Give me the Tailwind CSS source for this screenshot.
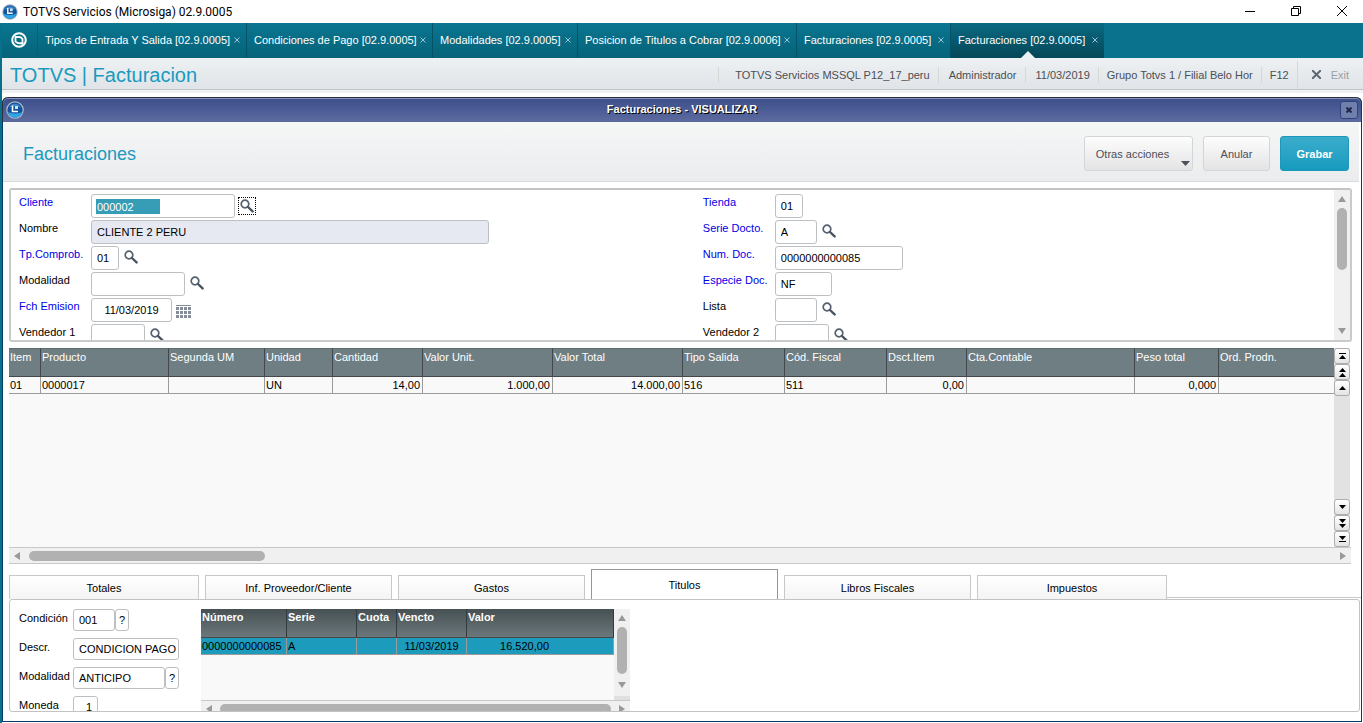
<!DOCTYPE html>
<html lang="es">
	<head>
		<meta charset="UTF-8" />
		<meta name="viewport" content="width=device-width, initial-scale=1.0" />
		<title>TOTVS Servicios (Microsiga) 02.9.0005</title>
		<script src="https://cdn.jsdelivr.net/npm/@tailwindcss/browser@4"></script>
	</head>

	<body
		class="h-screen overflow-hidden flex flex-col bg-white text-black text-[11px] leading-4 font-['Liberation_Sans',Arial,sans-serif]"
	>
		<!-- Shared icons -->
		<svg class="hidden">
			<symbol id="lens" viewBox="0 0 14 14">
				<circle cx="5" cy="5" r="3.8" fill="none" stroke="#56616f" stroke-width="1.7" />
				<path d="M8 8l4.6 4.4" stroke="#4a5563" stroke-width="2.4" stroke-linecap="round" />
			</symbol>
			<symbol id="orb" viewBox="0 0 18 18">
				<circle cx="9" cy="9" r="8.8" fill="#a9b9ca" />
				<circle cx="9" cy="9" r="7.6" fill="#12539a" />
				<path d="M2 11a7.200 7.200 0 0 0 14 0q-6 3-14 0z" fill="#2fa4e6" />
				<path d="M3 6.500a6.600 6.600 0 0 1 12 0q-6-2.500-12 0z" fill="#3f86c6" />
				<path d="M6.500 4.500v6h5.500" fill="none" stroke="#fff" stroke-width="1.600" />
				<path d="M9 5h3v3H9z" fill="#cfe4f5" />
			</symbol>
			<symbol id="cross" viewBox="0 0 6 6">
				<path d="M.5 .5l5 5M5.500 .5l-5 5" stroke="currentColor" stroke-width="1" />
			</symbol>
			<symbol id="up" viewBox="0 0 8 6"><path d="M4 0l4 6H0z" fill="#999" /></symbol>
			<symbol id="down" viewBox="0 0 8 6"><path d="M4 6l4-6H0z" fill="#999" /></symbol>
			<symbol id="left" viewBox="0 0 6 8"><path d="M0 4l6-4v8z" fill="#999" /></symbol>
			<symbol id="right" viewBox="0 0 6 8"><path d="M6 4L0 0v8z" fill="#999" /></symbol>
		</svg>

		<!-- System title bar -->
		<header class="h-[23px] shrink-0 flex items-center">
			<svg class="ml-0.5 size-4"><use href="#orb" /></svg>
			<h1 class="ml-[5px] text-xs font-[Roboto,'Open_Sans',sans-serif]">
				TOTVS Servicios (Microsiga) 02.9.0005
			</h1>
			<div class="ml-auto pr-4 flex items-center gap-9">
				<button aria-label="Minimizar" class="pb-0.5">
					<svg class="w-[10px] h-[10px]" viewBox="0 0 10 10"><path d="M0 5.500h10" stroke="#000" /></svg>
				</button>
				<button aria-label="Restaurar" class="pb-0.5">
					<svg class="w-[10px] h-[10px]" viewBox="0 0 10 10">
						<path d="M.5 2.500h7v7h-7zM2.500 2.500v-2h7v7h-2" fill="none" stroke="#000" />
					</svg>
				</button>
				<button aria-label="Cerrar" class="pb-0.5">
					<svg class="w-[10px] h-[10px]" viewBox="0 0 10 10"><path d="M0 0l10 10M10 0L0 10" stroke="#000" /></svg>
				</button>
			</div>
		</header>

		<div class="flex-1 min-h-0 flex flex-col border-l-2 border-[#07708b]">
			<!-- Routine tabs -->
			<nav class="h-[35px] shrink-0 flex bg-[#0a728d] text-white whitespace-nowrap [&>div]:pb-0.5">
				<button aria-label="Inicio" class="w-9 pr-0.5 pb-0.5 flex items-center justify-center bg-linear-to-b from-[#0b7691] to-[#056379] border-r border-[#0d5c70]">
					<svg class="size-4" viewBox="0 0 16 16">
						<circle cx="8" cy="8" r="6.800" fill="none" stroke="#fff" stroke-width="2" />
						<path d="M4.500 5l5 .2 2 1.800v4.500l-4.800-.5L4.500 9.500z" fill="none" stroke="#fff" stroke-width="1.800" stroke-linejoin="round" />
					</svg>
				</button>
				<div class="w-[209px] pl-[7px] pr-1.5 flex items-center justify-between bg-linear-to-b from-[#0b7691] to-[#056379] border-r border-[#045268]">
					<a href="#">Tipos de Entrada Y Salida [02.9.0005]</a>
					<button aria-label="Cerrar" class="text-[#9cc7d2]"><svg class="size-1.5"><use href="#cross" /></svg></button>
				</div>
				<div class="w-[186px] pl-[7px] pr-1.5 flex items-center justify-between bg-linear-to-b from-[#0b7691] to-[#056379] border-r border-[#045268]">
					<a href="#">Condiciones de Pago [02.9.0005]</a>
					<button aria-label="Cerrar" class="text-[#9cc7d2]"><svg class="size-1.5"><use href="#cross" /></svg></button>
				</div>
				<div class="w-[145px] pl-[7px] pr-1.5 flex items-center justify-between bg-linear-to-b from-[#0b7691] to-[#056379] border-r border-[#045268]">
					<a href="#">Modalidades [02.9.0005]</a>
					<button aria-label="Cerrar" class="text-[#9cc7d2]"><svg class="size-1.5"><use href="#cross" /></svg></button>
				</div>
				<div class="w-[219px] pl-[7px] pr-1.5 flex items-center justify-between bg-linear-to-b from-[#0b7691] to-[#056379] border-r border-[#045268]">
					<a href="#">Posicion de Titulos a Cobrar [02.9.0006]</a>
					<button aria-label="Cerrar" class="text-[#9cc7d2]"><svg class="size-1.5"><use href="#cross" /></svg></button>
				</div>
				<div class="w-[154px] pl-[7px] pr-1.5 flex items-center justify-between bg-linear-to-b from-[#0b7691] to-[#056379] border-r border-[#045268]">
					<a href="#">Facturaciones [02.9.0005]</a>
					<button aria-label="Cerrar" class="text-[#9cc7d2]"><svg class="size-1.5"><use href="#cross" /></svg></button>
				</div>
				<div class="relative w-[153px] pl-[7px] pr-1.5 flex items-center justify-between bg-linear-to-b from-[#0a6a82] to-[#054758]">
					<a href="#" aria-current="page">Facturaciones [02.9.0005]</a>
					<button aria-label="Cerrar" class="text-[#9cc7d2]"><svg class="size-1.5"><use href="#cross" /></svg></button>
					<svg class="absolute bottom-0 left-1/2 -translate-x-1/2 w-3.5 h-[7px]" viewBox="0 0 14 7"><path d="M7 0l7 7H0z" fill="#eef1f3" /></svg>
				</div>
			</nav>

			<!-- Module bar -->
			<div class="h-8 shrink-0 flex items-center bg-linear-to-b from-[#eef1f3] to-[#e0e4e8] border-b border-[#bfc4ca]">
				<h2 class="pl-2 pt-0.5 text-xl text-[#1a9abf] whitespace-nowrap">TOTVS | Facturacion</h2>
				<div class="ml-auto pt-0.5 pr-3.5 h-full flex items-center text-[#4b4f54] whitespace-nowrap">
					<span class="pl-4 pr-2 border-l border-[#d5d8d5]">TOTVS Servicios MSSQL P12_17_peru</span>
					<span class="pl-2.5 pr-2 border-l border-[#d5d8d5]">Administrador</span>
					<span class="pl-2.5 pr-2 border-l border-[#d5d8d5]">11/03/2019</span>
					<span class="px-2 border-l border-[#d5d8d5]">Grupo Totvs 1 / Filial Belo Hor</span>
					<span class="px-2 border-l border-[#d5d8d5]">F12</span>
					<button class="h-7 pl-3.5 flex items-center gap-2.5 border-l border-[#d5d8d5] text-[#9a9ea3]">
						<svg class="size-[9px]" viewBox="0 0 9 9"><path d="M0 0l9 9M9 0L0 9" stroke="#5d6974" stroke-width="2" /></svg>
						Exit
					</button>
				</div>
			</div>
			<div class="h-[3px] shrink-0 bg-[#f1f1f3]"></div>

			<!-- Dialog window -->
			<div class="mt-1 mr-px flex-1 min-h-0 mb-px flex flex-col border border-t-0 border-[#003c66] rounded-t-md">
				<div class="h-[25px] shrink-0 px-[3px] -mx-px flex items-center rounded-t-md border border-b-0 border-[#2b3040] bg-linear-to-b from-[#3b4e8b] to-[#5d6b9f] shadow-[inset_0_1px_0_#8792b8] text-white">
					<svg class="size-[18px]"><use href="#orb" /></svg>
					<h3 class="flex-1 pb-0.5 text-center font-bold [text-shadow:1px_1px_0_#000]">Facturaciones - VISUALIZAR</h3>
					<button aria-label="Cerrar" class="size-[18px] flex items-center justify-center rounded-[3px] border border-[#2f427c] bg-[#7080ad]">
						<svg class="size-1.5" viewBox="0 0 6 6"><path d="M.5 .5l5 5M5.500 .5l-5 5" stroke="#20284a" stroke-width="2" /></svg>
					</button>
				</div>

				<!-- Routine header -->
				<div class="h-[60px] shrink-0 mr-0.5 pl-5 pr-2.5 pt-1 flex items-center gap-2.5 bg-linear-to-b from-[#f5f6f6] to-[#ebecee] border-b border-[#d8dadc]">
					<h2 class="mr-auto text-lg text-[#1a9abf]">Facturaciones</h2>
					<button class="relative w-[109px] h-[35px] pr-3 rounded-[3px] border border-[#d3d5d7] bg-linear-to-b from-[#fdfdfd] to-[#e4e4e4] text-[#4b4f5a]">
						Otras acciones
						<svg class="absolute right-0.5 bottom-1 w-[9px] h-[5px]" viewBox="0 0 9 5"><path d="M0 0h9L4.500 5z" fill="#4a525c" /></svg>
					</button>
					<button class="w-[67px] h-[35px] rounded-[3px] border border-[#d3d5d7] bg-linear-to-b from-[#fdfdfd] to-[#e4e4e4] text-[#4b4f5a]">Anular</button>
					<button class="w-[69px] h-[35px] rounded-[3px] border border-[#1d98ba] bg-linear-to-b from-[#3aaccb] to-[#149bbf] text-white font-bold">Grabar</button>
				</div>

				<div class="flex-1 min-h-0 pl-1.5 pt-1.5 flex flex-col">
					<!-- Invoice header form -->
					<form class="h-[154px] shrink-0 mr-[9px] flex rounded-[3px] border-2 border-t-[#c3c3c3] border-[#cacaca] overflow-hidden">
						<div class="flex-1 pl-2 pt-1 grid grid-cols-[52%_1fr] content-start">
							<div class="flex flex-col gap-0.5">
								<div class="flex h-6">
									<label for="cliente" class="w-[72px] text-[#0000e6]">Cliente</label>
									<div class="w-36 h-6 p-1 border border-[#bcc0c2] rounded-[3px]">
										<input id="cliente" value="000002" class="block w-16 h-[15px] pl-px bg-[#379cb5] text-white outline-none" />
									</div>
									<button type="button" aria-label="Buscar" class="ml-[3px] mt-[3px] size-[18px] p-0.5 outline-1 -outline-offset-1 outline-dotted outline-black"><svg class="size-3.5"><use href="#lens" /></svg></button>
								</div>
								<div class="flex h-6">
									<label for="nombre" class="w-[72px]">Nombre</label>
									<input id="nombre" readonly value="CLIENTE 2 PERU" class="w-[398px] h-6 px-[5px] border border-[#bcc0c2] rounded-[3px] bg-[#e6e9f2]" />
								</div>
								<div class="flex h-6">
									<label for="comprob" class="w-[72px] text-[#0000e6]">Tp.Comprob.</label>
									<input id="comprob" value="01" class="w-7 h-6 px-[5px] border border-[#bcc0c2] rounded-[3px]" />
									<button type="button" aria-label="Buscar" class="ml-[5px] mt-1 size-3.5"><svg class="size-3.5"><use href="#lens" /></svg></button>
								</div>
								<div class="flex h-6">
									<label for="modalidad" class="w-[72px]">Modalidad</label>
									<input id="modalidad" class="w-[94px] h-6 px-[5px] border border-[#bcc0c2] rounded-[3px]" />
									<button type="button" aria-label="Buscar" class="ml-[5px] mt-1 size-3.5"><svg class="size-3.5"><use href="#lens" /></svg></button>
								</div>
								<div class="flex h-6">
									<label for="emision" class="w-[72px] text-[#0000e6]">Fch Emision</label>
									<input id="emision" value="11/03/2019" class="w-[81px] h-6 px-[5px] text-center border border-[#bcc0c2] rounded-[3px]" />
									<button type="button" aria-label="Calendario" class="ml-1 mt-1.5 size-[15px]">
										<svg class="w-[15px] h-3.5" viewBox="0 0 15 14">
											<path d="M0 .5h15" stroke="#868d99" />
											<path d="M0 3.500h15M0 7.500h15M0 11.500h15" stroke="#868d99" stroke-width="3" stroke-dasharray="3 1" />
										</svg>
									</button>
								</div>
								<div class="flex h-6">
									<label for="vendedor1" class="w-[72px]">Vendedor 1</label>
									<input id="vendedor1" class="w-[54px] h-6 px-[5px] border border-[#bcc0c2] rounded-[3px]" />
									<button type="button" aria-label="Buscar" class="ml-[5px] mt-1 size-3.5"><svg class="size-3.5"><use href="#lens" /></svg></button>
								</div>
							</div>
							<div class="flex flex-col gap-0.5">
								<div class="flex h-6">
									<label for="tienda" class="w-[72px] text-[#0000e6]">Tienda</label>
									<input id="tienda" value="01" class="w-7 h-6 px-[5px] border border-[#bcc0c2] rounded-[3px]" />
								</div>
								<div class="flex h-6">
									<label for="serie" class="w-[72px] text-[#0000e6]">Serie Docto.</label>
									<input id="serie" value="A" class="w-[42px] h-6 px-[5px] border border-[#bcc0c2] rounded-[3px]" />
									<button type="button" aria-label="Buscar" class="ml-[5px] mt-1 size-3.5"><svg class="size-3.5"><use href="#lens" /></svg></button>
								</div>
								<div class="flex h-6">
									<label for="numdoc" class="w-[72px] text-[#0000e6]">Num. Doc.</label>
									<input id="numdoc" value="0000000000085" class="w-32 h-6 px-[5px] border border-[#bcc0c2] rounded-[3px]" />
								</div>
								<div class="flex h-6">
									<label for="especie" class="w-[72px] text-[#0000e6]">Especie Doc.</label>
									<input id="especie" value="NF" class="w-[57px] h-6 px-[5px] border border-[#bcc0c2] rounded-[3px]" />
								</div>
								<div class="flex h-6">
									<label for="lista" class="w-[72px]">Lista</label>
									<input id="lista" class="w-[42px] h-6 px-[5px] border border-[#bcc0c2] rounded-[3px]" />
									<button type="button" aria-label="Buscar" class="ml-[5px] mt-1 size-3.5"><svg class="size-3.5"><use href="#lens" /></svg></button>
								</div>
								<div class="flex h-6">
									<label for="vendedor2" class="w-[72px]">Vendedor 2</label>
									<input id="vendedor2" class="w-[54px] h-6 px-[5px] border border-[#bcc0c2] rounded-[3px]" />
									<button type="button" aria-label="Buscar" class="ml-[5px] mt-1 size-3.5"><svg class="size-3.5"><use href="#lens" /></svg></button>
								</div>
							</div>
						</div>
						<div class="w-4 py-1.5 flex flex-col items-center bg-[#f0f0f0]">
							<svg class="w-2 h-1.5"><use href="#up" /></svg>
							<div class="mt-1.5 w-2.5 h-[62px] rounded-full bg-[#b1b1b1]"></div>
							<svg class="mt-auto w-2 h-1.5"><use href="#down" /></svg>
						</div>
					</form>

					<!-- Items grid -->
					<div class="mt-1.5 mr-[11px] flex-1 min-h-0 flex bg-[#f9f9f9]">
						<div class="flex-1">
							<table class="w-full table-fixed border-separate border-spacing-0 text-left">
								<thead>
									<tr class="h-[29px] bg-[#6f7e82] text-white align-top [&>th]:font-normal [&>th]:px-px [&>th]:border-t [&>th]:border-b [&>th]:border-b-[#44484b] [&>th]:border-t-[#5d6a6e] [&>th]:border-r [&>th]:border-r-[#44484b] [&>th:last-child]:border-r-0">
										<th class="w-8">Item</th>
										<th class="w-32">Producto</th>
										<th class="w-24">Segunda UM</th>
										<th class="w-[68px]">Unidad</th>
										<th class="w-[90px]">Cantidad</th>
										<th class="w-[130px]">Valor Unit.</th>
										<th class="w-[130px]">Valor Total</th>
										<th class="w-[102px]">Tipo Salida</th>
										<th class="w-[102px]">Cód. Fiscal</th>
										<th class="w-20">Dsct.Item</th>
										<th class="w-[168px]">Cta.Contable</th>
										<th class="w-[84px]">Peso total</th>
										<th>Ord. Prodn.</th>
									</tr>
								</thead>
								<tbody>
									<tr class="[&>td]:pl-px [&>td]:pr-0.5 [&>td]:border-b [&>td]:border-r [&>td]:border-[#9b9b9b] [&>td:last-child]:border-r-0">
										<td>01</td>
										<td>0000017</td>
										<td></td>
										<td>UN</td>
										<td class="text-right">14,00</td>
										<td class="text-right">1.000,00</td>
										<td class="text-right">14.000,00</td>
										<td>516</td>
										<td>511</td>
										<td class="text-right">0,00</td>
										<td></td>
										<td class="text-right">0,000</td>
										<td></td>
									</tr>
								</tbody>
							</table>
						</div>
						<div class="w-4 flex flex-col bg-[#e2e2e2] [&>button]:size-4 [&>button]:rounded-[3px] [&>button]:border [&>button]:border-[#adadad] [&>button]:bg-linear-to-b [&>button]:from-white [&>button]:to-[#e4e4e4] [&>button]:flex [&>button]:items-center [&>button]:justify-center">
							<button aria-label="Primero"><svg class="w-[7px] h-[7px]" viewBox="0 0 7 7"><path d="M0 0h7v1H0zM3.500 2L7 6H0z" /></svg></button>
							<button aria-label="Página anterior"><svg class="w-[7px] h-[9px]" viewBox="0 0 7 9"><path d="M3.500 0L7 4H0zM3.500 5L7 9H0z" /></svg></button>
							<button aria-label="Anterior"><svg class="w-[7px] h-1" viewBox="0 0 7 4"><path d="M3.500 0L7 4H0z" /></svg></button>
							<button aria-label="Siguiente" class="mt-auto"><svg class="w-[7px] h-1" viewBox="0 0 7 4"><path d="M3.500 4L7 0H0z" /></svg></button>
							<button aria-label="Página siguiente"><svg class="w-[7px] h-[9px]" viewBox="0 0 7 9"><path d="M3.500 4L7 0H0zM3.500 9L7 5H0z" /></svg></button>
							<button aria-label="Último"><svg class="w-[7px] h-[7px]" viewBox="0 0 7 7"><path d="M3.500 4L7 0H0zM0 5h7v1H0z" /></svg></button>
						</div>
					</div>
					<div class="h-[17px] shrink-0 mr-2.5 px-[5px] flex items-center bg-[#f0f0f0] border-y border-[#c8c8c8]">
						<svg class="w-1.5 h-2"><use href="#left" /></svg>
						<div class="ml-[9px] w-[236px] h-2.5 rounded-full bg-[#b1b1b1]"></div>
						<svg class="ml-auto w-1.5 h-2"><use href="#right" /></svg>
					</div>

					<!-- Detail tabs -->
					<div class="mt-[5px] h-[30px] shrink-0 flex items-end gap-1.5 [&>button]:border [&>button]:border-b-0">
						<button class="w-[190px] h-6 border-[#c8c8c8] bg-linear-to-b from-white to-[#f4f4f4]">Totales</button>
						<button class="w-[187px] h-6 border-[#c8c8c8] bg-linear-to-b from-white to-[#f4f4f4]">Inf. Proveedor/Cliente</button>
						<button class="w-[187px] h-6 border-[#c8c8c8] bg-linear-to-b from-white to-[#f4f4f4]">Gastos</button>
						<button class="w-[187px] h-[30px] border-[#969696] bg-white">Titulos</button>
						<button class="w-[187px] h-6 border-[#c8c8c8] bg-linear-to-b from-white to-[#f4f4f4]">Libros Fiscales</button>
						<button class="w-[190px] h-6 border-[#c8c8c8] bg-linear-to-b from-white to-[#f4f4f4]">Impuestos</button>
						<div class="-ml-1.5 flex-1 h-0.5 border-t border-[#c8c8c8]"></div>
					</div>
					<div class="h-[113px] shrink-0 mr-px mb-[9px] pl-[9px] pt-[9px] flex items-start border border-[#c3c3c3] rounded-[3px] overflow-hidden">
						<div class="w-[182px] shrink-0 flex flex-col gap-[7px] [&>div]:flex [&>div]:h-[22px] [&_label]:w-[54px] [&_label]:pt-px [&_input]:h-[22px] [&_input]:pl-[5px] [&_input]:border [&_input]:border-[#bcc0c2] [&_input]:rounded-[3px] [&_button]:w-3.5 [&_button]:border [&_button]:border-[#bcc0c2] [&_button]:rounded-[3px]">
							<div>
								<label for="condicion">Condición</label>
								<input id="condicion" value="001" class="w-[42px]" />
								<button>?</button>
							</div>
							<div>
								<label for="descr">Descr.</label>
								<input id="descr" value="CONDICION PAGO" class="w-[106px]" />
							</div>
							<div>
								<label for="modalidad2">Modalidad</label>
								<input id="modalidad2" value="ANTICIPO" class="w-[92px]" />
								<button>?</button>
							</div>
							<div>
								<label for="moneda">Moneda</label>
								<input id="moneda" value="1" class="w-[25px] pr-[5px] text-right" />
							</div>
						</div>
						<div class="w-[429px] bg-[#f9f9f9]">
							<div class="flex h-[91px]">
								<div class="flex-1">
									<table class="w-full table-fixed border-separate border-spacing-0 text-left">
										<thead>
											<tr class="h-[29px] bg-linear-to-b from-[#475154] to-[#6d797d] text-white align-top [&>th]:px-px [&>th]:border-b [&>th]:border-r [&>th]:border-b-[#44484b] [&>th]:border-r-[#333a3d]">
												<th class="w-[86px]">Número</th>
												<th class="w-[70px]">Serie</th>
												<th class="w-10">Cuota</th>
												<th class="w-[70px]">Vencto</th>
												<th>Valor</th>
											</tr>
										</thead>
										<tbody>
											<tr class="bg-[#1c9bbd] [&>td]:border-b [&>td]:border-r [&>td]:border-[#9b9b9b]">
												<td class="px-px">0000000000085</td>
												<td class="px-px">A</td>
												<td></td>
												<td class="text-center">11/03/2019</td>
												<td class="pr-16 text-right">16.520,00</td>
											</tr>
										</tbody>
									</table>
								</div>
								<div class="w-4 pt-1.5 flex flex-col items-center bg-[#f0f0f0]">
									<svg class="w-2 h-1.5 shrink-0"><use href="#up" /></svg>
									<div class="mt-1.5 w-2.5 h-[47px] shrink-0 rounded-full bg-[#b1b1b1]"></div>
									<svg class="my-2 w-2 h-1.5 shrink-0"><use href="#down" /></svg>
									<div class="w-full flex-1 bg-[#e0e0e0]"></div>
								</div>
							</div>
							<div class="h-4 px-[5px] flex items-center justify-between gap-2 bg-[#f0f0f0] border-t border-[#c8c8c8]">
								<svg class="w-1.5 h-2"><use href="#left" /></svg>
								<div class="flex-1 h-2.5 rounded-full bg-[#b1b1b1]"></div>
								<svg class="w-1.5 h-2"><use href="#right" /></svg>
							</div>
						</div>
					</div>
				</div>
			</div>
		</div>
	</body>
</html>
